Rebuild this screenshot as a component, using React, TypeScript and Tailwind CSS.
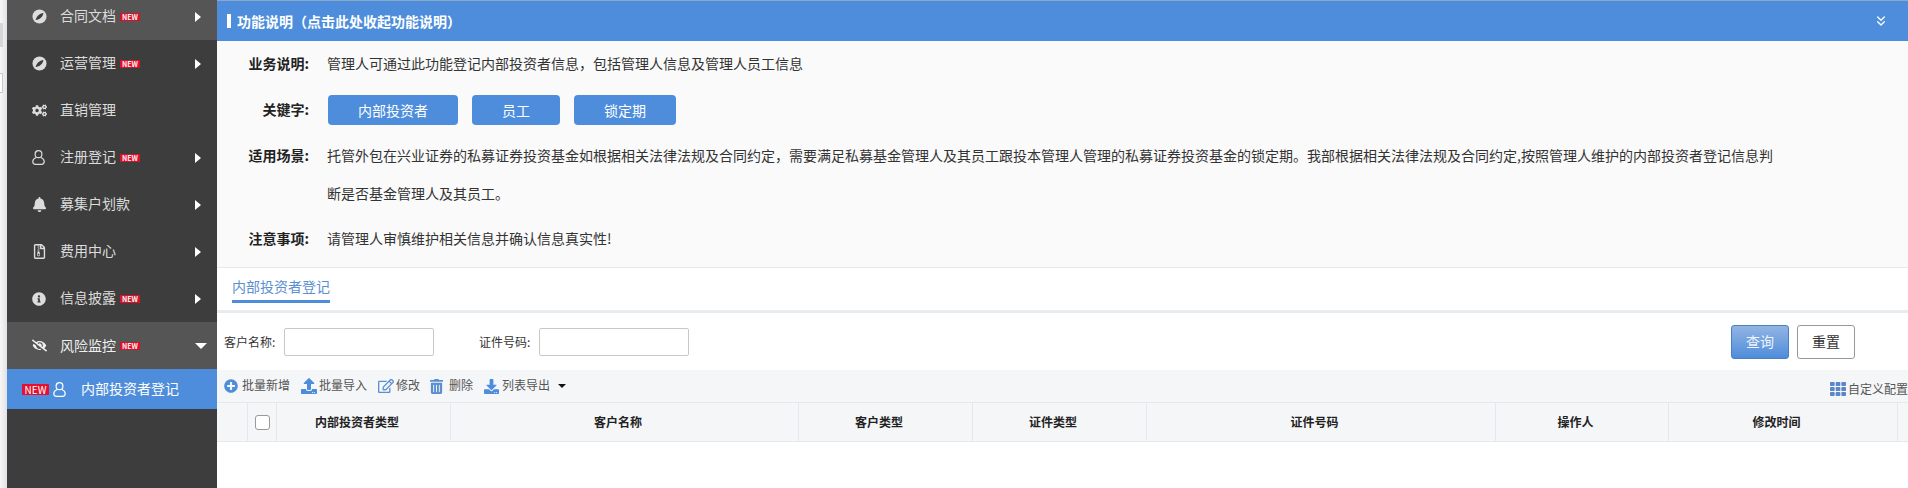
import React from 'react';
import {ChevronsDown} from "lucide-react";
import {
    FaBell,
    FaCogs,
    FaDownload,
    FaEyeSlash,
    FaInfoCircle,
    FaPlusCircle,
    FaRegEdit,
    FaRegFileArchive,
    FaTh,
    FaTrashAlt,
    FaUpload
} from "react-icons/fa";

const font = "font-['Noto_Sans_CJK_SC','Liberation_Sans',sans-serif]";

const NewTag = () => (
    <span className="ml-1 inline-block h-[8px] w-[20px] bg-[#d9112a] text-center text-[7px] font-bold leading-[8px] text-[#f5f5f5]">NEW</span>
);

const Compass = () => (
    <svg viewBox="0 0 16 16" className="h-[15px] w-[15px]">
        <circle cx="8" cy="8" r="7.5" fill="currentColor" />
        <path d="M3.800 11.800 C4.800 7.500 8 4.800 12.200 4.200 C11.400 8.500 8.200 11.200 3.800 11.800Z" fill="#3d3d3d" />
    </svg>
);

const UserOutline = () => (
    <svg viewBox="0 0 13 15" className="h-[15px] w-[13px]" fill="none" stroke="currentColor" strokeWidth="1.2">
        <ellipse cx="6.500" cy="4.200" rx="3.400" ry="3.500" />
        <path d="M4 7.500 C2 8.500 .8 9.500 .8 11.500 C.8 13.500 2 14.300 3.500 14.300 H9.500 C11 14.300 12.200 13.500 12.200 11.500 C12.200 9.500 11 8.500 9 7.500" />
    </svg>
);

const menus = [
    {name: "合同文档", icon: <Compass />, isNew: true, arrow: true, active: true, h: "h-[40px]"},
    {name: "运营管理", icon: <Compass />, isNew: true, arrow: true, h: "h-[47px]"},
    {name: "直销管理", icon: <FaCogs size={15} />, h: "h-[47px]"},
    {name: "注册登记", icon: <UserOutline />, isNew: true, arrow: true, h: "h-[47px]"},
    {name: "募集户划款", icon: <FaBell size={15} />, arrow: true, h: "h-[47px]"},
    {name: "费用中心", icon: <FaRegFileArchive size={15} />, arrow: true, h: "h-[47px]"},
    {name: "信息披露", icon: <FaInfoCircle size={14} />, isNew: true, arrow: true, h: "h-[47px]"},
];

const SideMenu = () => (
    <div className="flex w-[210px] shrink-0 flex-col bg-[#3d3d3d] text-[14px] text-[#dcdcdc]">
        {menus.map((m, index) => (
            <div key={index} className={`flex items-center pl-[25px] ${m.h} ${m.active ? "bg-[#555555] pb-[7px]" : ""}`}>
                <span className="flex w-[21px] justify-start">{m.icon}</span>
                <span className="ml-[7px] pb-[2px]">{m.name}</span>
                {m.isNew && <NewTag />}
                {m.arrow && <span className="ml-auto mr-[16px] h-0 w-0 border-y-[5px] border-l-[6px] border-y-transparent border-l-white"></span>}
            </div>
        ))}
        <div className="flex h-[47px] items-center bg-[#555555] pl-[25px] text-[#f0f0f0]">
            <span className="flex w-[21px]"><FaEyeSlash size={15} /></span>
            <span className="ml-[7px]">风险监控</span>
            <NewTag />
            <span className="ml-auto mr-[10px] h-0 w-0 border-x-[6px] border-t-[6px] border-x-transparent border-t-white"></span>
        </div>
        <div className="flex h-[40px] items-center bg-[#4d8ddb] pl-[15px] text-white">
            <span className="h-[11px] w-[27px] rounded-[1px] bg-[#e60f2f] text-center text-[10px] leading-[11px]">NEW</span>
            <span className="ml-[4px] flex"><UserOutline /></span>
            <span className="ml-[15px] pb-[2px]">内部投资者登记</span>
        </div>
    </div>
);

const DescRow = ({label, h, children}: {label: string, h: string, children: React.ReactNode}) => (
    <div className={`flex items-center ${h}`}>
        <span className="w-[88px] shrink-0 text-right text-[14px] font-bold text-[#222222]">{label}</span>
        <div className="ml-[18px] text-[14px] text-[#333333]">{children}</div>
    </div>
);

const Tag = ({text, w}: {text: string, w: string}) => (
    <span className={`mr-[14px] inline-block h-[30px] rounded-[4px] bg-[#4d8ddb] text-center text-[14px] leading-[30px] text-white ${w}`}>{text}</span>
);

const columns = [
    {title: "", w: "w-[31px]"},
    {title: "", w: "w-[29px]", check: true},
    {title: "内部投资者类型", w: "w-[174px]"},
    {title: "客户名称", w: "w-[348px]"},
    {title: "客户类型", w: "w-[174px]"},
    {title: "证件类型", w: "w-[174px]"},
    {title: "证件号码", w: "w-[349px]"},
    {title: "操作人", w: "w-[173px]"},
    {title: "修改时间", w: "w-[229px]"},
];

const Toolbar = () => (
    <div className="flex h-[32px] items-center bg-[#f5f6f8] pl-[7px] text-[12px] text-[#555555]">
        <span className="flex items-center">
            <FaPlusCircle size={14} className="text-[#4d8ddb]" />
            <span className="ml-[4px] pb-[2px]">批量新增</span>
        </span>
        <span className="ml-[11px] flex items-center">
            <FaUpload size={16} className="text-[#4d8ddb]" />
            <span className="ml-[2px] pb-[2px]">批量导入</span>
        </span>
        <span className="ml-[11px] flex items-center">
            <FaRegEdit size={16} className="text-[#5b8fd0]" />
            <span className="ml-[2px] pb-[2px]">修改</span>
        </span>
        <span className="ml-[9px] flex items-center">
            <FaTrashAlt size={15} className="text-[#5b8fd0]" />
            <span className="ml-[5px] pb-[2px]">删除</span>
        </span>
        <span className="ml-[11px] flex items-center">
            <FaDownload size={15} className="text-[#4d8ddb]" />
            <span className="ml-[3px] pb-[2px]">列表导出</span>
            <span className="ml-[8px] h-0 w-0 border-x-[4px] border-t-[4px] border-x-transparent border-t-[#111111]"></span>
        </span>
        <span className="ml-auto flex items-center pt-[6px]">
            <FaTh size={16} className="text-[#5b87c9]" />
            <span className="ml-[2px] text-[12px]">自定义配置</span>
        </span>
    </div>
);

const App = () => {
    return (
        <div className={`flex h-[488px] w-[1908px] overflow-hidden bg-white ${font}`}>
            <div className="flex w-[7px] shrink-0 flex-col items-start bg-gradient-to-r from-[#f7f7f7] to-[#e2e2e6] pt-[23px]">
                <span className="h-[24px] w-[3px] bg-[#d6d6d6]"></span>
                <span className="mt-[26px] h-[20px] w-[3px] border-y border-r border-[#c8c8c8] bg-white"></span>
            </div>
            <SideMenu />
            <div className="flex min-w-0 flex-1 flex-col">
                <div className="flex h-[41px] shrink-0 items-center border-t border-[#8aa9c9] bg-[#4d8ddb] pl-[10px] pr-[19px] text-[14px] font-bold text-white">
                    <span className="mr-[6px] h-[14px] w-[4px] bg-white"></span>
                    <span>功能说明（点击此处收起功能说明）</span>
                    <ChevronsDown className="ml-auto h-4 w-4" strokeWidth={2} />
                </div>
                <div className="flex h-[227px] shrink-0 flex-col border-b border-[#e8e8e8] bg-[#fafafa] px-[4px] pt-[1px]">
                    <DescRow label="业务说明:" h="h-[43px]">管理人可通过此功能登记内部投资者信息，包括管理人信息及管理人员工信息</DescRow>
                    <DescRow label="关键字:" h="h-[49px]">
                        <div className="ml-[1px]">
                            <Tag text="内部投资者" w="w-[130px]" />
                            <Tag text="员工" w="w-[88px]" />
                            <Tag text="锁定期" w="w-[102px]" />
                        </div>
                    </DescRow>
                    <DescRow label="适用场景:" h="h-[42px]">托管外包在兴业证券的私募证券投资基金如根据相关法律法规及合同约定，需要满足私募基金管理人及其员工跟投本管理人管理的私募证券投资基金的锁定期。我部根据相关法律法规及合同约定,按照管理人维护的内部投资者登记信息判</DescRow>
                    <DescRow label="" h="h-[34px]">断是否基金管理人及其员工。</DescRow>
                    <DescRow label="注意事项:" h="h-[57px]">请管理人审慎维护相关信息并确认信息真实性!</DescRow>
                </div>
                <div className="flex h-[45px] shrink-0 items-start border-b-[3px] border-[#e9ecef] pl-[15px]">
                    <span className="h-[35px] border-b-[3px] border-[#4d8ddb] pt-[8px] text-[14px] leading-[20px] text-[#5b8fd0]">内部投资者登记</span>
                </div>
                <div className="flex h-[57px] shrink-0 items-center pl-[7px] pr-[53px] text-[12px] text-[#333333]">
                    <label htmlFor="customerName" className="w-[60px]">客户名称:</label>
                    <input id="customerName" type="text" className="h-[28px] w-[150px] rounded-[2px] border border-[#c8c8c8] bg-white" />
                    <label htmlFor="certNo" className="ml-[45px] w-[60px]">证件号码:</label>
                    <input id="certNo" type="text" className="h-[28px] w-[150px] rounded-[2px] border border-[#c8c8c8] bg-white" />
                    <button type="button" className="ml-auto h-[34px] w-[58px] rounded-[3px] border border-[#4a7fc0] bg-gradient-to-b from-[#93b4e3] to-[#4d8ddb] text-[14px] text-[#eef4fb]">查询</button>
                    <button type="button" className="ml-[8px] h-[34px] w-[58px] rounded-[3px] border border-[#999999] bg-white text-[14px] text-[#333333]">重置</button>
                </div>
                <Toolbar />
                <div className="flex h-[40px] shrink-0 border-y border-[#e6e8eb] bg-[#f5f6f8]">
                    {columns.map((c, index) => (
                        <div key={index} className={`flex shrink-0 items-center justify-center border-r border-[#e6e8eb] text-[12px] font-bold text-[#222222] ${c.w} ${c.title ? "pr-[13px]" : ""}`}>
                            {c.check && <span className="h-[15px] w-[15px] rounded-[3px] border border-[#999999] bg-white"></span>}
                            {c.title}
                        </div>
                    ))}
                </div>
            </div>
        </div>
    );
};

export default App;
